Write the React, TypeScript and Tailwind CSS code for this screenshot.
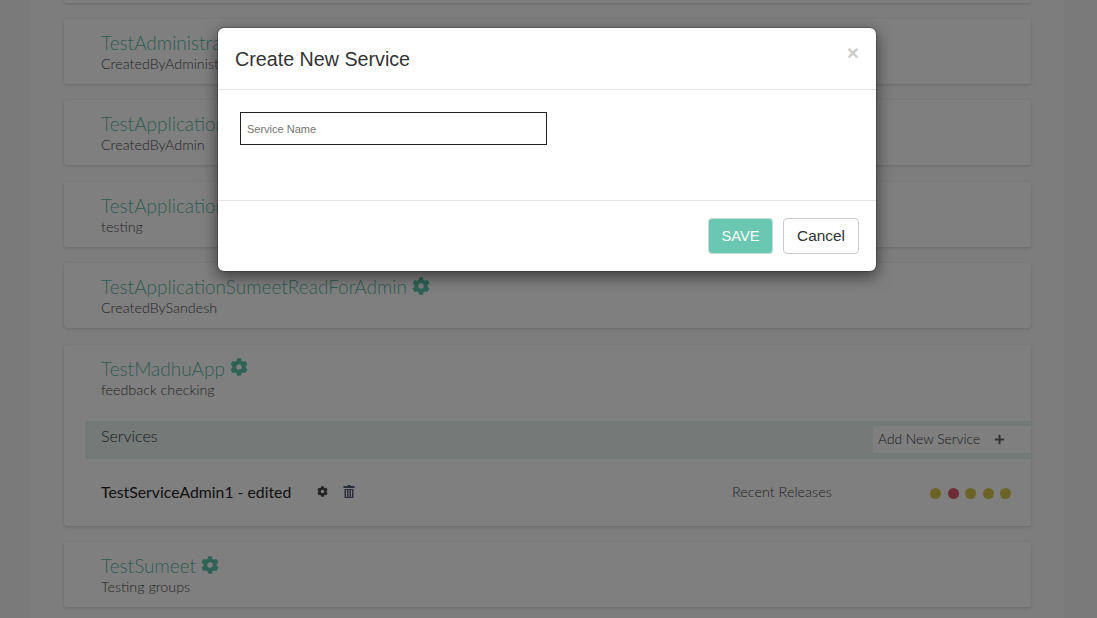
import { FaCog, FaPlus } from "react-icons/fa";

const apps = [
  { name: "TestAdministrator", note: "CreatedByAdministrator" },
  { name: "TestApplicationAdmin", note: "CreatedByAdmin" },
  { name: "TestApplicationGroup", note: "testing" },
  { name: "TestApplicationSumeetReadForAdmin", note: "CreatedBySandesh" },
];

const dots = ["bg-[#d8c84e]", "bg-[#dc5a68]", "bg-[#d8c84e]", "bg-[#d8c84e]", "bg-[#d8c84e]"];

function TrashIcon() {
  return (
    <svg viewBox="0 0 12 13" className="ml-[15px] h-[13px] w-[12px] text-[#5a5a80]" fill="currentColor">
      <path d="M4.5 0h3v1H11.5v2H.5V1h4z" />
      <path d="M1.5 4h9v9h-9zM3 5v7h1V5zM5.5 5v7h1V5zM8 5v7h1V5z" fillRule="evenodd" />
    </svg>
  );
}

function AppHeader({ name, note }: { name: string; note: string }) {
  return (
    <div className="pl-[37px] pt-[12px]">
      <div className="flex h-[24px] items-center gap-[5px]">
        <span className="text-[19px] font-light leading-[24px] text-[#5fb8a3]">{name}</span>
        <FaCog className="mb-[3px] h-[18px] w-[18px] text-[#5fc4ab]" />
      </div>
      <p className="text-[14.3px] font-light leading-[18px] text-[#4a4a4a]">{note}</p>
    </div>
  );
}

function Card({ height, children }: { height: string; children?: React.ReactNode }) {
  return <div className={`${height} shrink-0 rounded-[3px] bg-white shadow-[0_1px_3px_rgba(0,0,0,0.16)]`}>{children}</div>;
}

export default function App() {
  return (
    <div className="relative h-[618px] overflow-hidden bg-[#f4f4f4] font-['Lato',sans-serif]">
      <main className="ml-[30px] mr-[33px] flex h-full flex-col gap-[16.4px] bg-[#fafafa] pl-[34px] pr-[33px]">
        <div className="-mt-[62.4px]">
          <Card height="h-[65px]" />
        </div>
        {apps.map((app) => (
          <Card key={app.name} height="h-[65px]">
            <AppHeader name={app.name} note={app.note} />
          </Card>
        ))}
        <Card height="h-[181.5px]">
          <AppHeader name="TestMadhuApp" note="feedback checking" />
          <div className="ml-[21px] mt-[22px] flex h-[38px] items-center justify-between bg-[#e9f5f1] pl-[16px]">
            <span className="mb-[8px] text-[16px] font-light text-[#333]">Services</span>
            <button className="mb-[1px] flex h-[27px] w-[158px] items-center bg-white pl-[5px] pt-[1px] text-[13.8px] font-light text-[#333]">
              Add New Service
              <FaPlus className="ml-[14px] h-[11px] w-[11px] text-[#666]" />
            </button>
          </div>
          <div className="flex items-center pl-[37px] pr-[20px] pt-[22px]">
            <span className="w-[216px] text-[15.8px] leading-[22px] text-[#222]">TestServiceAdmin1 - edited</span>
            <FaCog className="h-[11px] w-[11px] text-[#444]" />
            <TrashIcon />
            <span className="ml-[377px] text-[14.4px] font-light text-[#444]">Recent Releases</span>
            <div className="ml-auto mt-[4px] flex gap-[6.5px]">
              {dots.map((color, i) => (
                <span key={i} className={`h-[11px] w-[11px] rounded-full ${color}`} />
              ))}
            </div>
          </div>
        </Card>
        <Card height="h-[65px]">
          <AppHeader name="TestSumeet" note="Testing groups" />
        </Card>
      </main>

      {/* Backdrop */}
      <div className="absolute inset-0 bg-black/50" />

      {/* Modal */}
      <div className="absolute left-[217px] top-[27px] h-[245px] w-[660px] rounded-[7px] border border-black/20 bg-white bg-clip-padding font-['Liberation_Sans',Arial,sans-serif] shadow-[0_5px_15px_rgba(0,0,0,0.5)]">
        <div className="relative h-[62px] border-b border-[#e5e5e5] pl-[17px] pt-[18px]">
          <h4 className="text-[19.7px] leading-[26px] text-[#333]">Create New Service</h4>
          <button className="absolute right-[17px] top-[11px] text-[21px] font-bold leading-[28px] text-[#000] opacity-20">×</button>
        </div>
        <div className="h-[110px] pl-[22px] pt-[22px]">
          <input
            placeholder="Service Name"
            className="h-[33px] w-[307px] border border-[#222] px-[6px] text-[11px] text-[#333] placeholder:text-[#757575]"
          />
        </div>
        <div className="flex h-[71px] items-start justify-end gap-[10px] border-t border-[#e5e5e5] pr-[17px] pt-[17px]">
          <button className="h-[36px] w-[65px] rounded-[4px] border border-[#c8d8d4] bg-[#69c7b2] pt-[1px] text-[14.7px] text-white">SAVE</button>
          <button className="h-[36px] w-[76px] rounded-[4px] border border-[#ccc] bg-white text-[15.4px] text-[#333]">Cancel</button>
        </div>
      </div>
    </div>
  );
}
